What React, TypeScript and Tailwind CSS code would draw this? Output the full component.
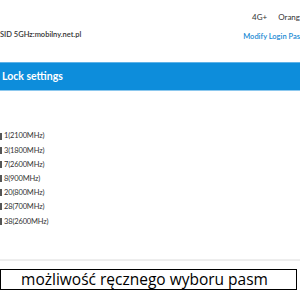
import React from 'react';

const bands = [
  '1(2100MHz)',
  '3(1800MHz)',
  '7(2600MHz)',
  '8(900MHz)',
  '20(800MHz)',
  '28(700MHz)',
  '38(2600MHz)',
];

export default function App() {
  return (
    <div className="w-[300px] h-[300px] overflow-hidden bg-white relative" style={{ fontFamily: 'Lato, "Open Sans", sans-serif' }}>
      {/* header */}
      <div className="h-[62px] flex justify-between">
        <div className="mt-[29px] text-[7.5px] font-semibold text-[#333] whitespace-nowrap">SID 5GHz:mobilny.net.pl</div>
        <div className="flex flex-col items-end whitespace-nowrap">
          <div className="mt-[11px] text-[8px] text-[#333] flex gap-[11px]">
            <span>4G+</span>
            <span>Orang</span>
          </div>
          <div className="mt-[8px] text-[7.5px] font-semibold text-[#1a8ad4]">Modify Login Pas</div>
        </div>
      </div>

      {/* title bar */}
      <div className="h-[29px] bg-[#0d8ddb] border-t border-[#5fb3e8] border-b border-b-[#8cc8ee] flex items-center">
        <div className="text-[10.5px] font-bold text-white pl-[2px]">Lock settings</div>
      </div>

      {/* band list */}
      <div className="pt-[40px] flex flex-col gap-[4.2px]">
        {bands.map((b) => (
          <div key={b} className="h-[10px] flex items-center gap-[2px] text-[7.5px] tracking-[-0.15px] text-[#333] whitespace-nowrap">
            <span className="w-[2px] h-[7px] bg-[#555]" />
            <span>{b}</span>
          </div>
        ))}
      </div>

      {/* caption */}
      <div className="absolute left-0 right-0 top-[259px] h-[2px] bg-[#eeeeee]" />
      <div className="absolute left-0 right-[3px] top-[269px] h-[21px] border border-black flex items-center justify-center pr-[8px] bg-white">
        <span className="text-[15.5px] text-black" style={{ fontFamily: '"Open Sans", sans-serif' }}>możliwość ręcznego wyboru pasm</span>
      </div>
    </div>
  );
}
